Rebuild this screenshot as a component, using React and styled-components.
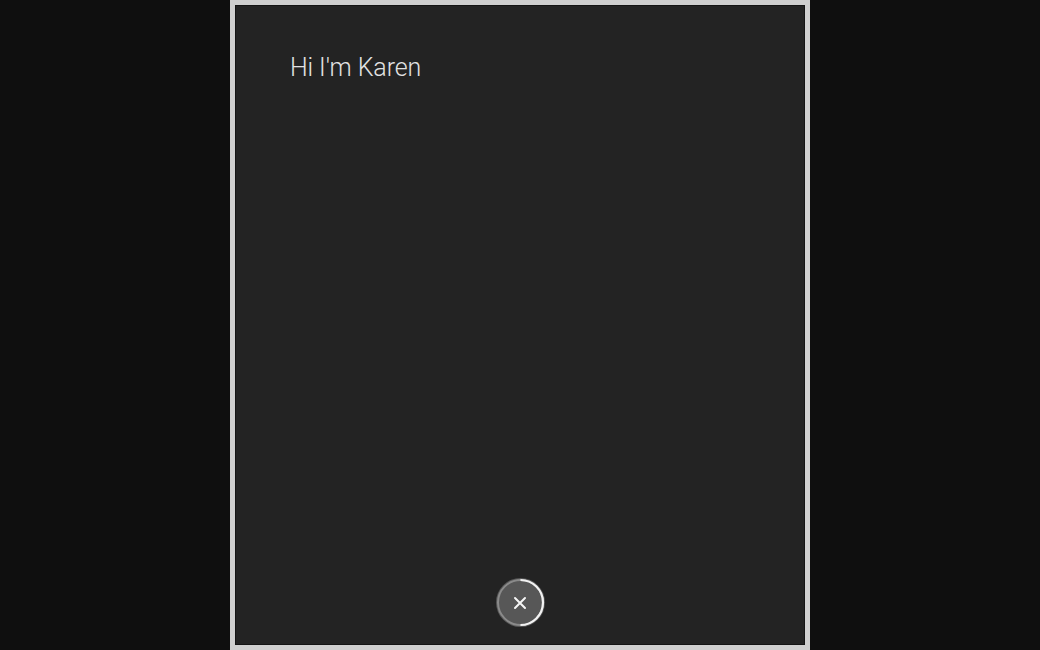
import React from "react";
import styled, { createGlobalStyle } from "styled-components";

const Global = createGlobalStyle`
  html, body { margin: 0; padding: 0; background: #0f0f0f; height: 100%; }
  #root { height: 100%; }
`;

const Page = styled.div`
  height: 650px;
  display: flex;
  justify-content: center;
  background: #0f0f0f;
`;

const Frame = styled.div`
  width: 580px;
  height: 650px;
  box-sizing: border-box;
  border: 5px solid #cfcfcf;
  background: #232323;
  box-shadow: inset 0 0 0 1px #141414;
  display: flex;
  flex-direction: column;
  align-items: stretch;
`;

const Greeting = styled.div`
  padding: 48px 0 0 55px;
  font-family: Roboto, "Helvetica Neue", sans-serif;
  font-weight: 300;
  font-size: 25px;
  letter-spacing: -0.1px;
  line-height: 30px;
  color: #e2e2e2;
  flex: 1;
`;

const Footer = styled.div`
  display: flex;
  justify-content: center;
  padding-bottom: 18px;
`;

const CloseButton = styled.button`
  position: relative;
  width: 49px;
  height: 49px;
  border-radius: 50%;
  border: none;
  padding: 0;
  background: #575757;
  display: flex;
  align-items: center;
  justify-content: center;
  cursor: pointer;
`;

const Ring = styled.svg`
  position: absolute;
  inset: 0;
`;

export default function App() {
  return (
    <>
      <Global />
      <Page>
        <Frame>
          <Greeting>Hi I'm Karen</Greeting>
          <Footer>
            <CloseButton aria-label="Close">
              <Ring width="49" height="49" viewBox="0 0 49 49">
                <circle cx="24.5" cy="24.5" r="22.5" fill="none" stroke="#8a8a8a" strokeWidth="2" />
                <path d="M24.5 2 A22.5 22.5 0 0 1 24.5 47" fill="none" stroke="#f2f2f2" strokeWidth="2.2" />
              </Ring>
              <svg width="14" height="14" viewBox="0 0 14 14">
                <path d="M2 2 L12 12 M12 2 L2 12" stroke="#f5f5f5" strokeWidth="2" strokeLinecap="round" />
              </svg>
            </CloseButton>
          </Footer>
        </Frame>
      </Page>
    </>
  );
}
